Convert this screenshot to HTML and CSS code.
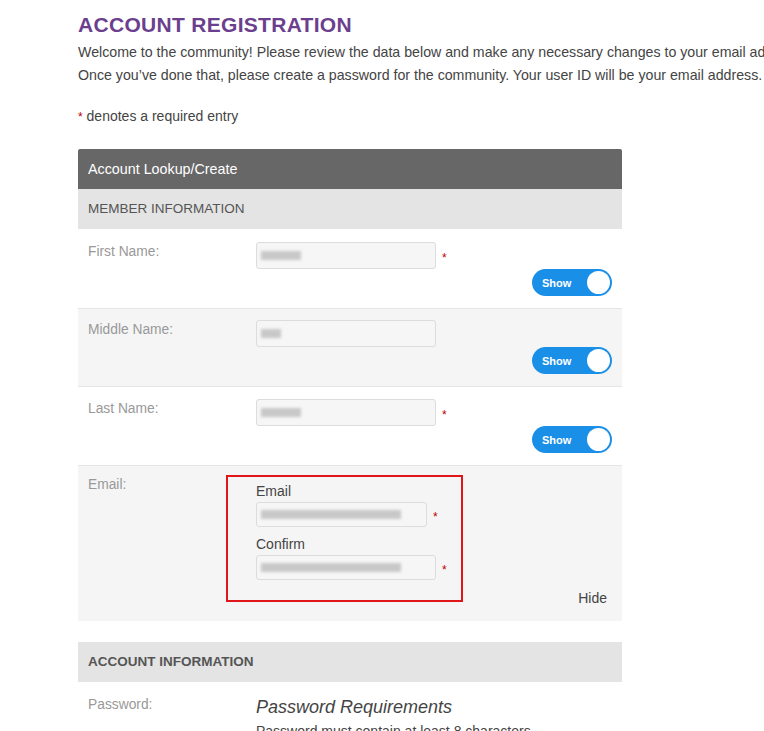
FILE: index.html
```html
<!DOCTYPE html>
<html>
<head>
<meta charset="utf-8">
<link rel="stylesheet" href="styles.css">
</head>
<body>
<div class="page">
  <h1 class="title">ACCOUNT REGISTRATION</h1>
  <p class="intro">Welcome to the community! Please review the data below and make any necessary changes to your email address.<br>Once you’ve done that, please create a password for the community. Your user ID will be your email address.</p>
  <p class="note"><span class="req">*</span> denotes a required entry</p>

  <div class="panel">
    <div class="panel-head">Account Lookup/Create</div>
    <div class="section">MEMBER INFORMATION</div>

    <div class="row first">
      <div class="label">First Name:</div>
      <div class="field">
        <div class="input-line"><div class="input"><span class="blur w40"></span></div><span class="req">*</span></div>
        <div class="toggle-line"><div class="toggle"><span class="toggle-text">Show</span><span class="knob"></span></div></div>
      </div>
    </div>

    <div class="row alt middle">
      <div class="label">Middle Name:</div>
      <div class="field">
        <div class="input-line"><div class="input"><span class="blur w20"></span></div></div>
        <div class="toggle-line"><div class="toggle"><span class="toggle-text">Show</span><span class="knob"></span></div></div>
      </div>
    </div>

    <div class="row">
      <div class="label">Last Name:</div>
      <div class="field">
        <div class="input-line"><div class="input"><span class="blur w40"></span></div><span class="req">*</span></div>
        <div class="toggle-line"><div class="toggle"><span class="toggle-text">Show</span><span class="knob"></span></div></div>
      </div>
    </div>

    <div class="row alt email-row">
      <div class="label">Email:</div>
      <div class="email-field">
        <div class="highlight">
          <div class="sub-label">Email</div>
          <div class="input-line"><div class="input short"><span class="blur w140"></span></div><span class="req">*</span></div>
          <div class="sub-label">Confirm</div>
          <div class="input-line"><div class="input"><span class="blur w140"></span></div><span class="req">*</span></div>
        </div>
        <div class="hide-line">Hide</div>
      </div>
    </div>

    <div class="spacer"></div>
    <div class="section bold">ACCOUNT INFORMATION</div>

    <div class="row pw-row">
      <div class="label">Password:</div>
      <div class="field">
        <div class="pw-title">Password Requirements</div>
        <div class="pw-text">Password must contain at least 8 characters</div>
      </div>
    </div>
  </div>
</div>
</body>
</html>
```

FILE: styles.css
```css
html, body {
  margin: 0;
  padding: 0;
  background: #fff;
  overflow: hidden;
}
body {
  font-family: "Liberation Sans", Arial, sans-serif;
  color: #444;
}
.page {
  padding: 12px 0 0 78px;
  width: 720px;
}
.title {
  margin: 0;
  font-size: 21px;
  line-height: 26px;
  font-weight: bold;
  color: #6b3f8e;
  letter-spacing: 0.3px;
}
.intro {
  margin: 3px 0 0;
  font-size: 14.2px;
  line-height: 23px;
  color: #444;
  white-space: nowrap;
}
.note {
  margin: 19px 0 0;
  font-size: 14px;
  line-height: 20px;
  color: #444;
}
.req {
  color: #b00;
  font-size: 12px;
}
.panel {
  margin-top: 22px;
  width: 544px;
}
.panel-head {
  background: #676767;
  color: #fff;
  height: 40px;
  line-height: 40px;
  padding-left: 10px;
  font-size: 14.3px;
  border-radius: 2px 2px 0 0;
}
.section {
  background: #e4e4e4;
  color: #555;
  height: 40px;
  line-height: 40px;
  padding-left: 10px;
  font-size: 13.5px;
}
.section.bold {
  font-weight: bold;
  color: #555;
}
.row {
  display: flex;
  padding: 12px 10px 12px 10px;
  border-bottom: 1px solid #e5e5e5;
  background: #fff;
}
.row.first {
  padding-top: 13px;
}
.row.middle {
  padding-top: 11px;
}
.row.alt {
  background: #f5f5f5;
}
.label {
  width: 138px;
  flex: none;
  color: #999;
  font-size: 13.8px;
  line-height: 20px;
}
.field {
  flex: 1;
  padding-left: 30px;
}
.input-line {
  display: flex;
  align-items: center;
}
.input {
  width: 174px;
  height: 25px;
  border: 1px solid #dcdcdc;
  border-radius: 3px;
  background: #f6f6f6;
  display: flex;
  align-items: center;
  padding-left: 4px;
  box-sizing: content-box;
  flex: none;
}
.input.short {
  width: 165px;
}
.input-line .req {
  margin-left: 6px;
  margin-top: 4px;
}
.blur {
  display: block;
  height: 9px;
  background: #c8c8c8;
  filter: blur(1.5px);
}
.w20 { width: 20px; }
.w40 { width: 40px; }
.w140 { width: 140px; }
.toggle-line {
  display: flex;
  justify-content: flex-end;
}
.toggle {
  width: 80px;
  height: 27px;
  border-radius: 14px;
  background: #1a8fe8;
  display: flex;
  align-items: center;
  justify-content: space-between;
  padding: 0 2px 0 10px;
  box-sizing: border-box;
}
.toggle-text {
  color: #fff;
  font-size: 11px;
  font-weight: bold;
}
.knob {
  width: 23px;
  height: 23px;
  border-radius: 50%;
  background: #fff;
}
.email-row {
  padding-top: 9px;
  padding-bottom: 15px;
  padding-right: 15px;
  border-bottom: none;
}
.email-field {
  flex: 1;
}
.highlight {
  width: 237px;
  height: 127px;
  box-sizing: border-box;
  border: 2px solid #e0161b;
  padding: 5px 0 0 28px;
}
.sub-label {
  font-size: 14px;
  color: #444;
  line-height: 18px;
  margin-bottom: 2px;
}
.highlight .input-line {
  margin-bottom: 8px;
}
.highlight .input {
  height: 23px;
}
.hide-line {
  text-align: right;
  font-size: 14px;
  color: #444;
  line-height: 16px;
  margin-top: -12px;
}
.spacer {
  height: 21px;
  background: #fff;
}
.pw-row {
  border-bottom: none;
  padding-top: 13px;
}
.pw-title {
  font-style: italic;
  font-size: 18px;
  line-height: 24px;
  color: #444;
}
.pw-text {
  margin-top: 4px;
  font-size: 14px;
  color: #444;
}
```
